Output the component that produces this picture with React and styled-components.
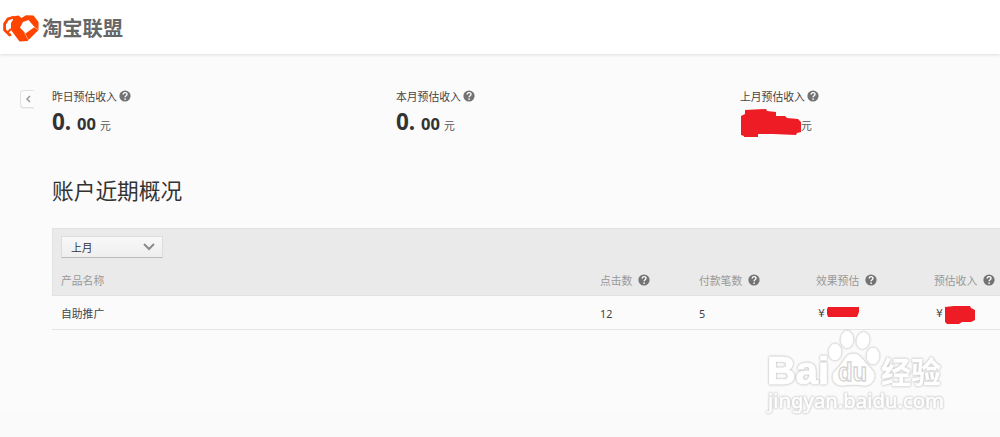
import React from 'react';
import styled, { createGlobalStyle } from 'styled-components';

const GlobalStyle = createGlobalStyle`
    * {
        box-sizing: border-box;
        margin: 0;
        padding: 0;
    }

    body {
        background: #fbfbfb;
        color: #444;
        font-family: 'Noto Sans', 'Noto Sans CJK SC', sans-serif;
        font-size: 10.8px;
        overflow: hidden;
    }
`;

const Page = styled.div`
    position: relative;
    width: 1000px;
    height: 437px;
    overflow: hidden;
    background: linear-gradient(#fbfbfb 412px, #fafafa 412px);
`;

const Header = styled.header`
    display: flex;
    align-items: center;
    height: 54px;
    padding: 2px 0 0 3px;
    background: #fff;
    box-shadow: 0 1px 3px rgba(0, 0, 0, .12);
`;

const Brand = styled.h1`
    margin-left: 3px;
    color: #666;
    font-size: 20.3px;
    font-weight: 700;
    line-height: 30px;
`;

const Summary = styled.section`
    display: flex;
    height: 96px;
    padding-top: 34px;
`;

const Collapse = styled.button`
    display: flex;
    flex: none;
    align-items: center;
    justify-content: center;
    width: 14px;
    height: 18px;
    margin: 2px 18px 0 20px;
    border: 1px solid #e2e2e2;
    border-right: 0;
    border-radius: 4px 0 0 4px;
    background: #fcfcfc;
    box-shadow: 0 1px 1px rgba(0, 0, 0, .05);
`;

const Metric = styled.div`
    flex: 0 0 344px;
`;

const Label = styled.p`
    display: flex;
    align-items: center;
    height: 16px;
    gap: ${({ $gap }) => $gap || 2}px;
    white-space: nowrap;
`;

const Amount = styled.p`
    display: flex;
    align-items: flex-start;
    height: 30px;
    margin-top: 3px;
    color: #333;
    line-height: 30px;

    strong {
        width: 24px;
        font-size: 22.5px;
        line-height: 30px;
    }

    b {
        width: 24px;
        padding-left: 1px;
        font-size: 16.5px;
        line-height: 34px;
    }

    span {
        color: #555;
        font-size: 10.8px;
        line-height: 37px;
    }
`;

const HiddenAmount = styled.svg`
    width: 61px;
    height: 30px;
`;

const Title = styled.h2`
    height: 78px;
    padding: 24px 0 0 52px;
    color: #333;
    font-size: 21.7px;
    font-weight: 400;
    line-height: 34px;
`;

const Report = styled.section`
    margin-left: 52px;
`;

const ReportHead = styled.div`
    height: 68px;
    padding-top: 7px;
    background: #eaeaea;
    border: 1px solid #e3e3e3;
    border-width: 1px 0 1px 1px;
`;

const Select = styled.button`
    display: flex;
    align-items: center;
    justify-content: space-between;
    width: 102px;
    height: 22px;
    margin-left: 8px;
    padding: 0 7px 0 9px;
    border: 1px solid #ddd;
    border-bottom-color: #bbb;
    border-radius: 1px;
    background: linear-gradient(#f8f8f8, #eee);
    color: #333;
    font: inherit;
`;

const Row = styled.div`
    display: grid;
    grid-template-columns: 539px 99px 117px 118px 1fr;
    align-items: center;
    height: ${({ $head }) => ($head ? '28px' : '34px')};
    margin-top: ${({ $head }) => ($head ? '8px' : '0')};
    padding-left: ${({ $head }) => ($head ? '8px' : '9px')};
    border-bottom: ${({ $head }) => ($head ? '0' : '1px solid #e5e5e5')};
    color: ${({ $head }) => ($head ? '#999' : '#444')};
    white-space: nowrap;
`;

const Money = styled.span`
    display: flex;
    align-items: center;
    padding-left: 2px;
    height: 34px;
    font-family: 'DejaVu Sans', sans-serif;
`;

const Mask = styled.svg`
    width: 34px;
    height: 22px;
    margin-left: 1px;
`;

const Watermark = styled.svg`
    position: absolute;
    left: 760px;
    top: 325px;
    pointer-events: none;

    g {
        filter: drop-shadow(0 0 1px #bbb) drop-shadow(0 0 .6px #ddd);
    }
`;

const Logo = () => (
    <svg width="36" height="27" viewBox="0 0 36 27">
        <path d="M11 2 5 4 1.600 9v6l5 5 1.500-.5" fill="none" stroke="#ff4400" strokeWidth="2.800" />
        <path d="m5 17 3-3" stroke="#ff4400" strokeWidth="2" />
        <path d="m9.500 1.500 6-1L18.500 3 23 .3l7.500.2L35.500 7v8L24.500 26l-8 .5L8 15V8l2-3Z" fill="#ff4400" />
        <path d="m20 7 5.500-2 6 7-9 6.500-5.500-6Z" fill="#fff" />
        <path d="m30 11.500 5 3M21.500 18l4 7" stroke="#fff" strokeWidth=".5" />
    </svg>
);

const Help = () => (
    <svg width="12" height="12" viewBox="0 0 12 12">
        <circle cx="6" cy="6" r="5.6" fill="#737373" />
        <path d="M4.2 4.5C4.2 2 8 2.1 8 4.3 8 5.8 6.1 5.7 6.1 7.3" fill="none" stroke="#fff" strokeWidth="1.4" />
        <circle cx="6.1" cy="9.1" r=".85" fill="#fff" />
    </svg>
);

const PawWatermark = () => (
    <Watermark width="200" height="100" viewBox="0 0 200 100">
        <g fill="#fff" stroke="#fff" strokeLinejoin="round">
            <text x="7" y="59" fontFamily="Liberation Sans, sans-serif" fontSize="38" fontWeight="700" textLength="62" lengthAdjust="spacingAndGlyphs" strokeWidth="1">Bai</text>
            <ellipse cx="75" cy="27" rx="6" ry="8" />
            <ellipse cx="87" cy="14.5" rx="6" ry="8.3" />
            <ellipse cx="103" cy="15.5" rx="6" ry="8" transform="rotate(12 103 15.5)" />
            <ellipse cx="113" cy="31" rx="6" ry="8" />
            <path d="M93 29c8 0 10 7 14 11 4 4 8 7 7 12-1 7-7 9-12 8-6-1-12-1-17 0-7 1-12-2-12-8 0-5 5-8 8-12 4-5 5-11 12-11Z" />
        </g>
        <text x="78" y="56" fill="#fff" stroke="#d5d5d5" strokeWidth="1.4" fontFamily="Liberation Sans, sans-serif" fontSize="25" fontWeight="700" textLength="29" lengthAdjust="spacingAndGlyphs">du</text>
        <g fill="#fff" stroke="#fff">
            <text x="121" y="58" fontFamily="Noto Sans CJK SC, sans-serif" fontSize="30" fontWeight="700" textLength="60" lengthAdjust="spacingAndGlyphs" strokeWidth=".3">经验</text>
            <text x="8" y="83" fontFamily="Noto Sans, sans-serif" fontSize="20" textLength="176" lengthAdjust="spacingAndGlyphs" strokeWidth=".6">jingyan.baidu.com</text>
        </g>
    </Watermark>
);

const metrics = [
    { label: '昨日预估收入' },
    { label: '本月预估收入' },
    { label: '上月预估收入', hidden: true },
];

const columns = ['点击数', '付款笔数', '效果预估', '预估收入'];

const App = () => (
    <>
        <GlobalStyle />
        <Page>
            <Header>
                <Logo />
                <Brand>淘宝联盟</Brand>
            </Header>
            <Summary>
                <Collapse>
                    <svg width="6" height="8" viewBox="0 0 6 8">
                        <path d="M5 1 2 4l3 3" fill="none" stroke="#999" strokeWidth="1.5" />
                    </svg>
                </Collapse>
                {metrics.map(({ label, hidden }) => (
                    <Metric key={label}>
                        <Label>{label}<Help /></Label>
                        <Amount>
                            {hidden ? (
                                <HiddenAmount viewBox="0 0 61 30">
                                    <path d="M5 3 26 2l1 2 9 1v4h9l2 2 11 1 3 3v10l-4 1-1 2-23-1H18v4H4v-2l-3-1V9l4-2Z" fill="#ee1c24" />
                                </HiddenAmount>
                            ) : (
                                <>
                                    <strong>0.</strong>
                                    <b>00</b>
                                </>
                            )}
                            <span>元</span>
                        </Amount>
                    </Metric>
                ))}
            </Summary>
            <Title>账户近期概况</Title>
            <Report>
                <ReportHead>
                    <Select>
                        上月
                        <svg width="12" height="8" viewBox="0 0 12 8">
                            <path d="m1 1 5 5 5-5" fill="none" stroke="#8c8c8c" strokeWidth="2" />
                        </svg>
                    </Select>
                    <Row $head>
                        <span>产品名称</span>
                        {columns.map((column) => (
                            <Label key={column} $gap={6}>{column}<Help /></Label>
                        ))}
                    </Row>
                </ReportHead>
                <Row>
                    <span>自助推广</span>
                    <span>12</span>
                    <span>5</span>
                    <Money>
                        ¥
                        <Mask viewBox="0 0 34 22">
                            <path d="M2 5h31v5l-2 5H2l-1-3V7Z" fill="#ee1c24" />
                        </Mask>
                    </Money>
                    <Money>
                        ¥
                        <Mask viewBox="0 0 34 22">
                            <path d="m1 5 9-1h16l1 2 4 2v10l-4 2h-9l-3 2H3l-2-2Z" fill="#ee1c24" />
                        </Mask>
                    </Money>
                </Row>
            </Report>
            <PawWatermark />
        </Page>
    </>
);

export default App;
